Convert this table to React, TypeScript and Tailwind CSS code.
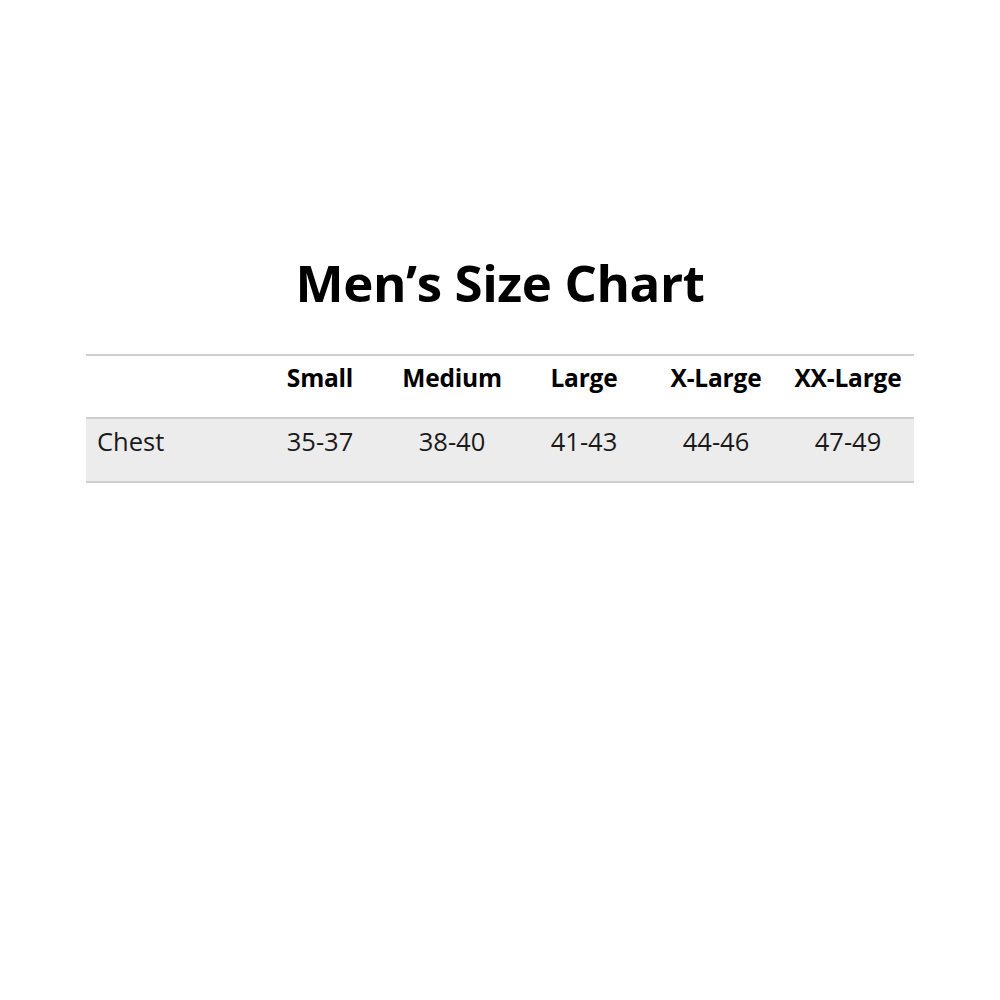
import React from "react"

const sizes = [
    { label: "Small", chest: "35-37" },
    { label: "Medium", chest: "38-40" },
    { label: "Large", chest: "41-43" },
    { label: "X-Large", chest: "44-46" },
    { label: "XX-Large", chest: "47-49" },
]

const App = () => {
    return (
        <div className="w-[1000px] h-[1000px] bg-white font-['Open_Sans',sans-serif] text-black">
            <div className="pt-[250px] flex justify-center">
                <h1 className="text-[51px] leading-[64px] font-bold tracking-[-0.4px]">Men’s Size Chart</h1>
            </div>

            <div className="mx-[86px] mt-[40px] border-t-2 border-b-2 border-[#cfcfcf]">
                <div className="grid grid-cols-[168px_repeat(5,132px)] h-[63px] pb-[17px] items-center border-b-2 border-[#cfcfcf]">
                    <div />
                    {sizes.map((s) => (
                        <div key={s.label} className="text-center text-[24.5px] font-bold tracking-[-0.2px]">
                            {s.label}
                        </div>
                    ))}
                </div>
                <div className="grid grid-cols-[168px_repeat(5,132px)] h-[62px] pb-[18px] items-center bg-[#ececec] text-[25.5px] text-[#1a1a1a]">
                    <div className="pl-[11px]">Chest</div>
                    {sizes.map((s) => (
                        <div key={s.label} className="text-center">
                            {s.chest}
                        </div>
                    ))}
                </div>
            </div>
        </div>
    )
}

export default App
